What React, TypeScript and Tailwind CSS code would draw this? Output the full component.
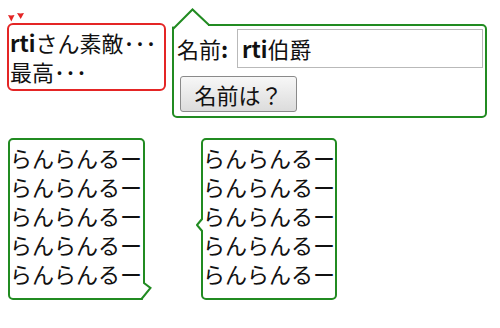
import React from "react";

const GREEN = "#218b21";
const RED = "#e42525";

function Lines() {
  return (
    <>
      {Array.from({ length: 5 }).map((_, i) => (
        <div key={i}>らんらんるー</div>
      ))}
    </>
  );
}

export default function App() {
  return (
    <div className="w-[500px] h-[328px] bg-white text-[#111] font-['Noto_Sans_CJK_JP',sans-serif] text-[22px] leading-[29px] overflow-hidden">
      {/* Row 1 */}
      <div className="flex items-start pt-[23px] pl-[7px]">
        {/* red note */}
        <div className="relative w-[159px] h-[68px] border-2 border-[#e42525] rounded-[6px] px-[1px] py-[3px] whitespace-nowrap">
          <svg className="absolute left-[-2px] top-[-13px]" width="20" height="11" viewBox="0 0 20 11">
            <path d="M1,3 L4,3.6 L7.5,3 L4.3,9.5 Z" fill={RED} />
            <path d="M10,1 L13.5,1.6 L17,1 L13.7,7 Z" fill={RED} />
          </svg>
          <div>
            <span className="font-bold">rti</span>さん素敵･･･
          </div>
          <div>最高･･･</div>
        </div>

        {/* green form callout */}
        <div className="relative ml-[6px] mt-[1px] w-[315px] h-[94px] border-2 border-[#218b21] rounded-[5px] rounded-tl-none pl-[3px] pr-[2px] pt-[3px]">
          <svg className="absolute left-[-2px] top-[-18px]" width="40" height="22" viewBox="0 0 40 22">
            <rect x="0" y="0" width="36" height="18.6" fill="#ffffff" />
            <polyline points="1,21 20.5,1.5 37,17" fill="none" stroke={GREEN} strokeWidth="2" />
          </svg>
          <div className="flex items-center justify-between">
            <span className="whitespace-nowrap">
              名前<span className="font-bold">:</span>
            </span>
            <div className="w-[246px] h-[39px] border border-[#b9b9b9] pl-[4px] flex items-center whitespace-nowrap">
              <span className="font-bold">rti</span>伯爵
            </div>
          </div>
          <button className="mt-[8px] ml-[3px] w-[117px] h-[36px] border border-[#8a8a8a] rounded-[3px] bg-gradient-to-b from-[#f7f7f7] to-[#dcdcdc] text-[22px] leading-[29px] text-[#111] whitespace-nowrap flex items-center justify-center">
            名前は？
          </button>
        </div>
      </div>

      {/* Row 2 */}
      <div className="flex items-start mt-[20px] pl-[8px]">
        <div className="relative w-[137px] h-[162px] border-2 border-[#218b21] rounded-[5px] rounded-br-none pt-[3px] whitespace-nowrap">
          <Lines />
          <svg className="absolute left-[130px] top-[138px]" width="14" height="26" viewBox="0 0 14 26">
            <rect x="2.8" y="4" width="6" height="20" fill="#ffffff" />
            <polyline points="4,3 4,5 10.5,10 1.5,21" fill="none" stroke={GREEN} strokeWidth="2" />
          </svg>
        </div>

        <div className="relative ml-[56px] w-[136px] h-[162px] border-2 border-[#218b21] rounded-[5px] pt-[3px] whitespace-nowrap">
          <Lines />
          <svg className="absolute left-[-10px] top-[77px]" width="12" height="16" viewBox="0 0 12 16">
            <polygon points="10,2.5 4,8 10,13.5" fill="#ffffff" />
            <polyline points="9,2 4,8 9,14" fill="none" stroke={GREEN} strokeWidth="2" strokeLinejoin="round" />
          </svg>
        </div>
      </div>
    </div>
  );
}
